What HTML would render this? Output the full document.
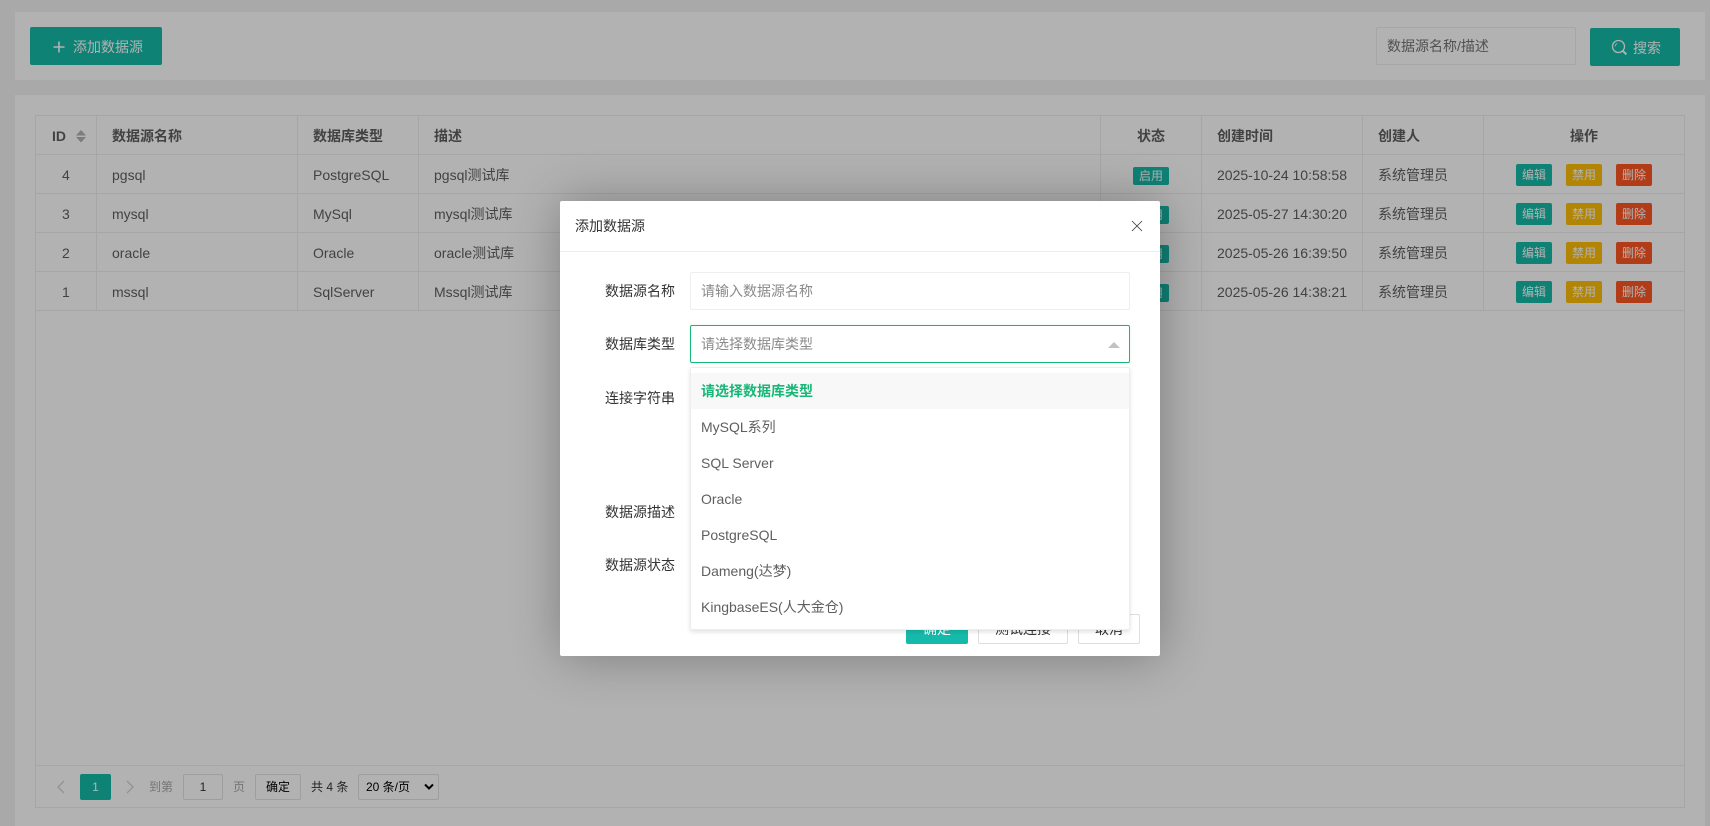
<!DOCTYPE html>
<html lang="zh-CN">
<head>
<meta charset="utf-8">
<title>数据源</title>
<style>
html,body{margin:0;padding:0;width:1710px;height:826px;overflow:hidden;background:#f2f2f2}
body{position:relative;font-family:"Liberation Sans","Noto Sans CJK SC",sans-serif;font-size:14px;color:#5f5f5f}
div,span{box-sizing:border-box}
.a{position:absolute}
.t{position:absolute;white-space:nowrap;line-height:20px;height:20px}
.c{text-align:center}
.card{position:absolute;background:#fff}
.hl{position:absolute;height:1px;background:#eee}
.vl{position:absolute;width:1px;background:#eee}
.th{font-weight:bold;color:#5f5f5f}
.btn{position:absolute;width:36px;height:22px;line-height:22px;text-align:center;font-size:12px;color:#fff;border-radius:2px}
.bg{background:#16baaa}.by{background:#ffc107}.br{background:#ff5722}
.bd{position:absolute;left:1133px;width:36px;height:18px;line-height:18px;text-align:center;font-size:12px;color:#fff;background:#16baaa;border-radius:2px}
#shade{position:absolute;left:0;top:0;width:1710px;height:826px;background:rgba(0,0,0,.3)}
#modal{position:absolute;left:560px;top:201px;width:600px;height:455px;background:#fff;border-radius:2px;box-shadow:1px 1px 50px rgba(0,0,0,.3)}
.lb{position:absolute;left:45px;width:70px;color:#333;line-height:20px;height:20px;text-align:right;white-space:nowrap}
.inp{position:absolute;left:130px;width:440px;height:38px;border:1px solid #eee;background:#fff;border-radius:2px;line-height:36px;padding-left:10px;color:#8a8a8a;white-space:nowrap}
.mb{position:absolute;top:413px;height:30px;line-height:28px;text-align:center;border:1px solid #dedede;border-radius:2px;background:#fff;color:#333}
#dd{position:absolute;left:130px;top:166px;width:440px;height:263px;background:#fff;border:1px solid #eee;border-radius:2px;box-shadow:0 2px 4px rgba(0,0,0,.12);padding-top:5px}
.op{height:36px;line-height:36px;padding-left:10px;color:#5f5f5f;white-space:nowrap}
</style>
</head>
<body>
<!-- top card -->
<div class="card" style="left:15px;top:12px;width:1690px;height:68px"></div>
<div class="a" style="left:30px;top:27px;width:132px;height:38px;background:#16baaa;border-radius:2px"></div>
<svg class="a" style="left:52px;top:40px" width="14" height="14" viewBox="0 0 14 14"><path d="M7 1.500v11M1.500 7h11" stroke="#fff" stroke-width="1.600" fill="none"/></svg>
<span class="t" style="left:73px;top:37px;color:#fff">添加数据源</span>

<div class="a" style="left:1376px;top:27px;width:200px;height:38px;border:1px solid #eee;border-radius:2px;background:#fff"></div>
<span class="t" style="left:1387px;top:36px;color:#757575">数据源名称/描述</span>
<div class="a" style="left:1590px;top:28px;width:90px;height:38px;background:#16baaa;border-radius:2px"></div>
<svg class="a" style="left:1611px;top:39px" width="17" height="17" viewBox="0 0 17 17"><circle cx="7.500" cy="7.500" r="6" stroke="#fff" stroke-width="1.300" fill="none"/><path d="M11.800 11.800l3.600 3.600" stroke="#fff" stroke-width="2" fill="none"/><path d="M4.200 7.500a3.300 3.300 0 0 1 2-3" stroke="#fff" stroke-width=".8" fill="none"/></svg>
<span class="t" style="left:1633px;top:38px;color:#fff">搜索</span>

<!-- table card -->
<div class="card" style="left:15px;top:95px;width:1690px;height:731px"></div>
<div class="a" style="left:35px;top:115px;width:1650px;height:693px;border:1px solid #eee"></div>
<div class="hl" style="left:35px;top:154px;width:1650px"></div>
<div class="hl" style="left:35px;top:193px;width:1650px"></div>
<div class="hl" style="left:35px;top:232px;width:1650px"></div>
<div class="hl" style="left:35px;top:271px;width:1650px"></div>
<div class="hl" style="left:35px;top:310px;width:1650px"></div>
<div class="hl" style="left:35px;top:765px;width:1650px"></div>
<div class="vl" style="left:96px;top:115px;height:196px"></div>
<div class="vl" style="left:297px;top:115px;height:196px"></div>
<div class="vl" style="left:418px;top:115px;height:196px"></div>
<div class="vl" style="left:1100px;top:115px;height:196px"></div>
<div class="vl" style="left:1201px;top:115px;height:196px"></div>
<div class="vl" style="left:1362px;top:115px;height:196px"></div>
<div class="vl" style="left:1483px;top:115px;height:196px"></div>

<span class="t th" style="left:52px;top:126px">ID</span>
<svg class="a" style="left:76px;top:130px" width="10" height="13" viewBox="0 0 10 13"><path d="M5 0L10 5.500H0z" fill="#b2b2b2"/><path d="M0 7h10L5 12.500z" fill="#b2b2b2"/></svg>
<span class="t th" style="left:112px;top:126px">数据源名称</span>
<span class="t th" style="left:313px;top:126px">数据库类型</span>
<span class="t th" style="left:434px;top:126px">描述</span>
<span class="t th" style="left:1137px;top:126px">状态</span>
<span class="t th" style="left:1217px;top:126px">创建时间</span>
<span class="t th" style="left:1378px;top:126px">创建人</span>
<span class="t th" style="left:1570px;top:126px">操作</span>

<!-- row 1 -->
<span class="t" style="left:62px;top:165px">4</span>
<span class="t" style="left:112px;top:165px">pgsql</span>
<span class="t" style="left:313px;top:165px">PostgreSQL</span>
<span class="t" style="left:434px;top:165px">pgsql测试库</span>
<div class="bd" style="top:167px">启用</div>
<span class="t" style="left:1217px;top:165px">2025-10-24 10:58:58</span>
<span class="t" style="left:1378px;top:165px">系统管理员</span>
<div class="btn bg" style="left:1516px;top:164px">编辑</div><div class="btn by" style="left:1566px;top:164px">禁用</div><div class="btn br" style="left:1616px;top:164px">删除</div>
<!-- row 2 -->
<span class="t" style="left:62px;top:204px">3</span>
<span class="t" style="left:112px;top:204px">mysql</span>
<span class="t" style="left:313px;top:204px">MySql</span>
<span class="t" style="left:434px;top:204px">mysql测试库</span>
<div class="bd" style="top:206px">启用</div>
<span class="t" style="left:1217px;top:204px">2025-05-27 14:30:20</span>
<span class="t" style="left:1378px;top:204px">系统管理员</span>
<div class="btn bg" style="left:1516px;top:203px">编辑</div><div class="btn by" style="left:1566px;top:203px">禁用</div><div class="btn br" style="left:1616px;top:203px">删除</div>
<!-- row 3 -->
<span class="t" style="left:62px;top:243px">2</span>
<span class="t" style="left:112px;top:243px">oracle</span>
<span class="t" style="left:313px;top:243px">Oracle</span>
<span class="t" style="left:434px;top:243px">oracle测试库</span>
<div class="bd" style="top:245px">启用</div>
<span class="t" style="left:1217px;top:243px">2025-05-26 16:39:50</span>
<span class="t" style="left:1378px;top:243px">系统管理员</span>
<div class="btn bg" style="left:1516px;top:242px">编辑</div><div class="btn by" style="left:1566px;top:242px">禁用</div><div class="btn br" style="left:1616px;top:242px">删除</div>
<!-- row 4 -->
<span class="t" style="left:62px;top:282px">1</span>
<span class="t" style="left:112px;top:282px">mssql</span>
<span class="t" style="left:313px;top:282px">SqlServer</span>
<span class="t" style="left:434px;top:282px">Mssql测试库</span>
<div class="bd" style="top:284px">启用</div>
<span class="t" style="left:1217px;top:282px">2025-05-26 14:38:21</span>
<span class="t" style="left:1378px;top:282px">系统管理员</span>
<div class="btn bg" style="left:1516px;top:281px">编辑</div><div class="btn by" style="left:1566px;top:281px">禁用</div><div class="btn br" style="left:1616px;top:281px">删除</div>

<!-- pagination -->
<svg class="a" style="left:56px;top:780px" width="10" height="14" viewBox="0 0 10 14"><path d="M8 1L2 7l6 6" stroke="#d2d2d2" stroke-width="1.300" fill="none"/></svg>
<div class="a" style="left:80px;top:774px;width:31px;height:26px;line-height:26px;text-align:center;background:#16baaa;color:#fff;font-size:12px;border-radius:2px">1</div>
<svg class="a" style="left:125px;top:780px" width="10" height="14" viewBox="0 0 10 14"><path d="M2 1l6 6-6 6" stroke="#d2d2d2" stroke-width="1.300" fill="none"/></svg>
<span class="t" style="left:149px;top:777px;font-size:12px;color:#a8a8a8">到第</span>
<div class="a" style="left:183px;top:774px;width:40px;height:26px;line-height:24px;text-align:center;border:1px solid #e2e2e2;border-radius:2px;font-size:12px;color:#333">1</div>
<span class="t" style="left:233px;top:777px;font-size:12px;color:#a8a8a8">页</span>
<div class="a" style="left:255px;top:774px;width:46px;height:26px;line-height:24px;text-align:center;border:1px solid #e2e2e2;border-radius:2px;font-size:12px;color:#000">确定</div>
<span class="t" style="left:311px;top:777px;font-size:12px;color:#333">共 4 条</span>
<div class="a" style="left:358px;top:774px;width:81px;height:26px;border:1px solid #e2e2e2;border-radius:2px"></div>
<span class="t" style="left:366px;top:777px;font-size:12px;color:#000">20 条/页</span>
<svg class="a" style="left:424px;top:783px" width="10" height="8" viewBox="0 0 10 8"><path d="M1 1.500l4 4 4-4" stroke="#000" stroke-width="2" fill="none"/></svg>

<div id="shade"></div>

<div id="modal">
  <span class="t" style="left:15px;top:15px;color:#333">添加数据源</span>
  <svg class="a" style="left:571px;top:19px" width="12" height="12" viewBox="0 0 12 12"><path d="M1 1l10 10M11 1L1 11" stroke="#333" stroke-width=".8" fill="none"/></svg>
  <div class="hl" style="left:0;top:50px;width:600px"></div>

  <div class="lb" style="top:80px">数据源名称</div>
  <div class="inp" style="top:71px">请输入数据源名称</div>
  <div class="lb" style="top:133px">数据库类型</div>
  <div class="inp" style="top:124px;border-color:#16b777;box-shadow:0 0 2px rgba(22,183,119,.15)">请选择数据库类型</div>
  <div class="a" style="left:548px;top:141px;width:0;height:0;border-left:6px solid transparent;border-right:6px solid transparent;border-bottom:6px solid #c2c2c2"></div>
  <div class="lb" style="top:187px">连接字符串</div>
  <div class="lb" style="top:301px">数据源描述</div>
  <div class="lb" style="top:354px">数据源状态</div>

  <div class="mb" style="left:346px;width:62px;background:#16baaa;border-color:#16baaa;color:#fff">确定</div>
  <div class="mb" style="left:418px;width:90px">测试连接</div>
  <div class="mb" style="left:518px;width:62px">取消</div>

  <div id="dd">
    <div class="op" style="background:#f8f8f8;color:#16b777;font-weight:bold">请选择数据库类型</div>
    <div class="op">MySQL系列</div>
    <div class="op">SQL Server</div>
    <div class="op">Oracle</div>
    <div class="op">PostgreSQL</div>
    <div class="op">Dameng(达梦)</div>
    <div class="op">KingbaseES(人大金仓)</div>
  </div>
</div>
</body>
</html>
